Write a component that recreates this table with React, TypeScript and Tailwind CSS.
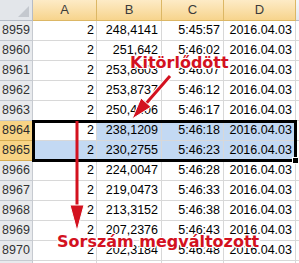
const rows = [
  { n: 8959, a: '2', b: '248,4141', c: '5:45:57' },
  { n: 8960, a: '2', b: '251,642', c: '5:46:02' },
  { n: 8961, a: '2', b: '253,8603', c: '5:46:07' },
  { n: 8962, a: '2', b: '253,8737', c: '5:46:12' },
  { n: 8963, a: '2', b: '250,4406', c: '5:46:17' },
  { n: 8964, a: '2', b: '238,1209', c: '5:46:18' },
  { n: 8965, a: '2', b: '230,2755', c: '5:46:23' },
  { n: 8966, a: '2', b: '224,0047', c: '5:46:28' },
  { n: 8967, a: '2', b: '219,0473', c: '5:46:33' },
  { n: 8968, a: '2', b: '213,3152', c: '5:46:38' },
  { n: 8969, a: '2', b: '207,2376', c: '5:46:43' },
  { n: 8970, a: '2', b: '202,3184', c: '5:46:48' },
  { n: 8971, a: '', b: '', c: '' },
]

const halo =
  '[text-shadow:1px_0_0_#fff,-1px_0_0_#fff,0_1px_0_#fff,0_-1px_0_#fff,1px_1px_0_#fff,-1px_-1px_0_#fff,1px_-1px_0_#fff,-1px_1px_0_#fff]'

export default function App() {
  return (
    <div className="relative w-[299px] h-[263px] overflow-hidden bg-white font-['Liberation_Sans',Arial,sans-serif] text-[12.5px] text-black">
      {/* column headers */}
      <div className="flex h-[21px]">
        <div className="relative w-[33px] shrink-0 bg-[#e3e6ea] border-r border-b border-[#b6bcc6]">
          <svg className="absolute right-[3px] bottom-[3px]" width="11" height="11">
            <polygon points="11,0 11,11 0,11" fill="#c4c8ce" />
          </svg>
        </div>
        {[
          ['A', 'w-[64px]'],
          ['B', 'w-[65px]'],
          ['C', 'w-[62px]'],
          ['D', 'w-[72px]'],
        ].map(([l, w]) => (
          <div
            key={l}
            className={`${w} shrink-0 flex items-center justify-center bg-gradient-to-b from-[#fdebc6] to-[#f7d48c] border-r border-b border-[#dcb765] text-[#3b3b3b] text-[13px]`}
          >
            {l}
          </div>
        ))}
        <div className="flex-1 bg-gradient-to-b from-[#f7f8fa] to-[#e4e8ee] border-b border-[#b6bcc6]" />
      </div>

      {/* data rows */}
      {rows.map((r) => {
        const sel = r.n === 8964 || r.n === 8965
        const fill = sel ? 'bg-[#c3d9f3]' : 'bg-white'
        return (
          <div key={r.n} className="flex h-[20px]">
            <div
              className={`w-[33px] shrink-0 flex items-center justify-center border-r border-b text-[12.5px] ${
                sel ? 'bg-[#f8d485] border-[#d9ae52] text-[#2a2a2a]' : 'bg-[#e8eaed] border-[#c6cad0] text-[#333]'
              }`}
            >
              {r.n}
            </div>
            <div
              className={`w-[64px] shrink-0 flex items-center justify-end pr-[2px] border-r border-b border-[#d8d8d8] ${
                r.n === 8964 ? 'bg-white' : fill
              }`}
            >
              {r.a}
            </div>
            <div className={`w-[65px] shrink-0 flex items-center justify-end pr-[3px] border-r border-b border-[#d8d8d8] ${fill}`}>
              {r.b}
            </div>
            <div className={`w-[62px] shrink-0 flex items-center justify-end pr-[3px] border-r border-b border-[#d8d8d8] ${fill}`}>
              {r.c}
            </div>
            <div className={`w-[72px] shrink-0 flex items-center justify-end pr-[3px] border-r border-b border-[#d8d8d8] ${fill}`}>
              {r.c ? '2016.04.03' : ''}
            </div>
            <div className="flex-1 border-b border-[#d8d8d8]" />
          </div>
        )
      })}

      {/* selection frame */}
      <div className="absolute left-[32px] top-[120px] w-[265px] h-[42px] border-[3px] border-black" />
      <div className="absolute left-[292px] top-[157px] w-[7px] h-[7px] bg-black border border-white" />

      {/* annotations */}
      <svg className="absolute left-0 top-0" width="299" height="263">
        <line x1="170" y1="76" x2="143" y2="107" stroke="#fff" strokeWidth="5" />
        <line x1="170" y1="76" x2="143" y2="107" stroke="#d3121f" strokeWidth="3" />
        <polygon points="132,119 151,107 141,98" fill="#d3121f" stroke="#fff" strokeWidth="1" />
        <line x1="77" y1="121" x2="77" y2="208" stroke="#d3121f" strokeWidth="3" />
        <polygon points="70,205 84,205 77,231" fill="#d3121f" stroke="#fff" strokeWidth="1" />
      </svg>
      <div
        className={`absolute left-[130px] top-[55px] leading-none font-['DejaVu_Sans',sans-serif] font-bold text-[16px] text-[#d3121f] ${halo}`}
      >
        Kitörlődött
      </div>
      <div
        className={`absolute left-[57px] top-[234px] leading-none font-['DejaVu_Sans',sans-serif] font-bold text-[16px] text-[#d3121f] ${halo}`}
      >
        Sorszám megváltozott
      </div>
    </div>
  )
}
